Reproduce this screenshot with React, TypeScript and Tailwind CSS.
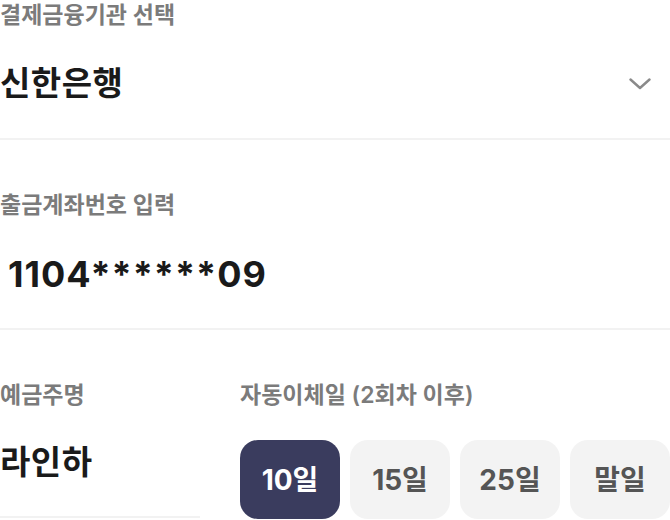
export default function App() {
  const days = ["10일", "15일", "25일", "말일"];
  const selected = "10일";

  return (
    <div className="w-[670px] h-[520px] overflow-hidden bg-white font-['Inter','Noto_Sans_CJK_KR',sans-serif]">
      {/* 결제금융기관 */}
      <section className="border-b-2 border-[#f2f2f2]">
        <div className="text-[23px] leading-[30px] font-semibold text-[#7b7b7b]">
          결제금융기관 선택
        </div>
        <div className="h-[108px] flex items-center justify-between">
          <span className="text-[33px] font-bold text-[#1a1a1a] tracking-[0.5px]">
            신한은행
          </span>
          <svg
            width="22"
            height="12"
            viewBox="0 0 22 12"
            fill="none"
            className="mr-[19px]"
          >
            <path
              d="M1.5 1.5 L11 10 L20.5 1.5"
              stroke="#8a8a8a"
              strokeWidth="2.4"
              strokeLinecap="round"
              strokeLinejoin="round"
            />
          </svg>
        </div>
      </section>

      {/* 출금계좌번호 */}
      <section className="pt-[50px] border-b-2 border-[#f2f2f2]">
        <div className="text-[23px] leading-[30px] font-semibold text-[#7b7b7b]">
          출금계좌번호 입력
        </div>
        <div className="h-[108px] flex items-center pl-2">
          <span className="text-[36px] font-bold text-[#1a1a1a] tracking-[1px]">
            1104******09
          </span>
        </div>
      </section>

      {/* 예금주 / 자동이체일 */}
      <section className="pt-[50px] flex gap-10">
        <div className="w-[200px]">
          <div className="text-[23px] leading-[30px] font-semibold text-[#7b7b7b]">
            예금주명
          </div>
          <div className="h-[108px] flex items-center border-b-2 border-[#f2f2f2]">
            <span className="text-[33px] font-bold text-[#1a1a1a] tracking-[0.5px]">
              라인하
            </span>
          </div>
        </div>
        <div className="flex-1">
          <div className="text-[23px] leading-[30px] font-semibold text-[#7b7b7b]">
            자동이체일 (2회차 이후)
          </div>
          <div className="mt-[30px] flex gap-[10px]">
            {days.map((d) => (
              <button
                key={d}
                className={
                  d === selected
                    ? "w-[100px] h-[79px] rounded-[18px] bg-[#3a3c5e] text-white text-[28px] font-bold"
                    : "w-[100px] h-[79px] rounded-[18px] bg-[#f3f3f3] text-[#555555] text-[28px] font-bold"
                }
              >
                {d}
              </button>
            ))}
          </div>
        </div>
      </section>
    </div>
  );
}
